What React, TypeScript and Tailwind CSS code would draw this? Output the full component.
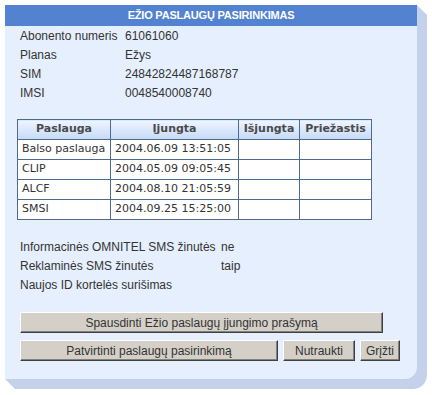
const info = [
  ["Abonento numeris", "61061060"],
  ["Planas", "Ežys"],
  ["SIM", "24842824487168787"],
  ["IMSI", "0048540008740"],
];

const services = [
  ["Balso paslauga", "2004.06.09 13:51:05"],
  ["CLIP", "2004.05.09 09:05:45"],
  ["ALCF", "2004.08.10 21:05:59"],
  ["SMSI", "2004.09.25 15:25:00"],
];

const options = [
  ["Informacinės OMNITEL SMS žinutės", "ne"],
  ["Reklaminės SMS žinutės", "taip"],
  ["Naujos ID kortelės surišimas", ""],
];

// classic grey outset button
function Button({ label, width }: { label: string; width: string }) {
  return (
    <button
      type="button"
      className={`${width} h-[21px] bg-[#d4d0c8] border border-t-white border-l-white border-b-[#404040] border-r-[#404040] shadow-[inset_-1px_-1px_0_#808080] text-[12px] text-[#333] leading-none`}
    >
      {label}
    </button>
  );
}

export default function App() {
  const th =
    "border border-[#4d6b8e] bg-gradient-to-b from-[#eef5ff] to-[#c6daf6] font-bold text-[#4a4a4a] text-center h-[20px] p-0";
  const td = "border border-[#4d6b8e] bg-white text-[#333] h-[20px] px-[4px] py-0 whitespace-nowrap";

  return (
    <div className="bg-white w-[432px] h-[395px] p-[5px] font-['Liberation_Sans',Arial,sans-serif]">
      <div className="relative w-[412px] h-[374px]">
        {/* extruded drop shadow behind the panel */}
        <div className="absolute left-0 top-0 w-[422px] h-[384px] bg-[#c3d1ea] rounded-br-[14px] [clip-path:polygon(412px_0,422px_10px,422px_100%,10px_100%,0_374px)]" />

        <div className="relative w-[412px] h-[374px] bg-[#e6effd] rounded-br-[12px] flex flex-col">
          <div className="h-[21px] bg-[#5282d0] flex items-center justify-center text-white font-bold text-[11px] tracking-[-0.2px]">
            EŽIO PASLAUGŲ PASIRINKIMAS
          </div>

          <div className="pl-[15px] pt-[1px] text-[12px] text-[#333] leading-[19px]">
            {info.map(([k, v]) => (
              <div key={k} className="flex">
                <span className="w-[105px]">{k}</span>
                <span>{v}</span>
              </div>
            ))}
          </div>

          <table className="ml-[12px] mt-[16px] border-collapse table-fixed w-[354px] text-[11px] font-['DejaVu_Sans',Verdana,sans-serif]">
            <colgroup>
              <col className="w-[93px]" />
              <col className="w-[128px]" />
              <col className="w-[61px]" />
              <col className="w-[72px]" />
            </colgroup>
            <thead>
              <tr>
                <th className={th}>Paslauga</th>
                <th className={th}>Įjungta</th>
                <th className={th}>Išjungta</th>
                <th className={th}>Priežastis</th>
              </tr>
            </thead>
            <tbody>
              {services.map(([name, on]) => (
                <tr key={name}>
                  <td className={td}>{name}</td>
                  <td className={td}>{on}</td>
                  <td className={td}></td>
                  <td className={td}></td>
                </tr>
              ))}
            </tbody>
          </table>

          <div className="pl-[15px] mt-[18px] text-[12px] text-[#333] leading-[19px]">
            {options.map(([k, v]) => (
              <div key={k} className="flex">
                <span className="w-[201px]">{k}</span>
                <span>{v}</span>
              </div>
            ))}
          </div>

          <div className="pl-[15px] mt-[17px] flex flex-col gap-[7px]">
            <Button label="Spausdinti Ežio paslaugų įjungimo prašymą" width="w-[363px]" />
            <div className="flex gap-[5px]">
              <Button label="Patvirtinti paslaugų pasirinkimą" width="w-[258px]" />
              <Button label="Nutraukti" width="w-[72px]" />
              <Button label="Grįžti" width="w-[40px]" />
            </div>
          </div>
        </div>
      </div>
    </div>
  );
}
